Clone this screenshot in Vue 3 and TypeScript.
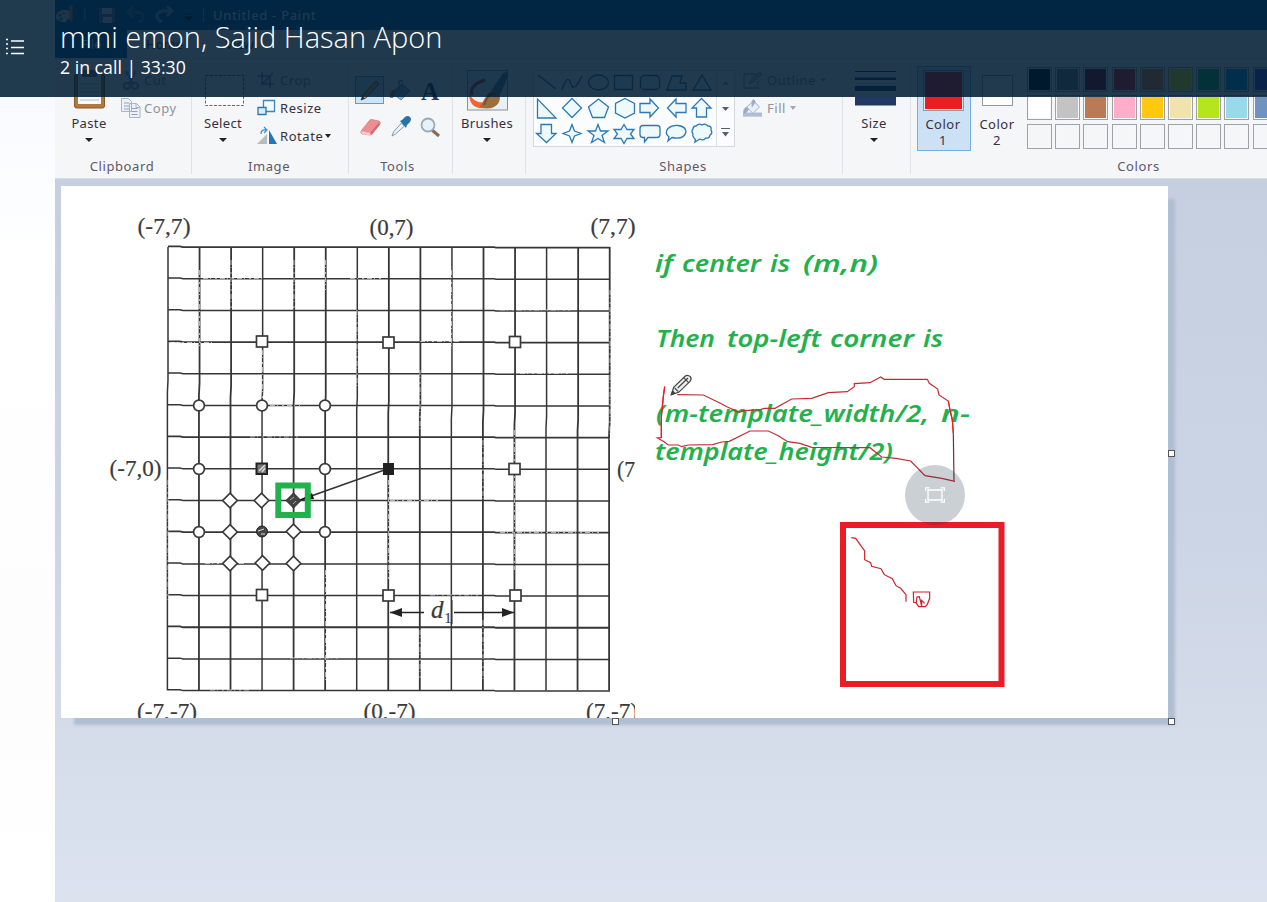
<script setup lang="ts">
const grid = Array.from({ length: 15 }, (_, i) => i)
const gx = (i: number): number => 168 + i * 31.55
const gy = (i: number): number => 247 + i * 31.68

type Pt = [number, number]
const squares: Pt[] = [[262, 341.5], [388.5, 342.5], [515, 342], [514.5, 469], [262, 595], [388.5, 595.5], [515.5, 595.5]]
const circles: Pt[] = [[199, 405.5], [262, 405.5], [325, 405.5], [199, 469], [325, 469], [199, 532], [325, 532]]
const diamonds: Pt[] = [[230, 500.5], [261.5, 500.5], [230, 532], [293.5, 531.5], [230, 563.5], [262.5, 563], [293.5, 563.5]]

interface Label { text: string; x: number; y: number; w: number }
const labels: Label[] = [
  { text: '(-7,7)', x: 137.5, y: 233.5, w: 53 },
  { text: '(0,7)', x: 369.5, y: 234.5, w: 44 },
  { text: '(7,7)', x: 590.5, y: 233.5, w: 45 },
  { text: '(-7,0)', x: 109.5, y: 476, w: 52 },
  { text: '(7', x: 617, y: 476.5, w: 18 },
  { text: '(-7,-7)', x: 137, y: 719, w: 60 },
  { text: '(0,-7)', x: 363.5, y: 719, w: 52 },
  { text: '(7,-7)', x: 586, y: 719, w: 52 },
]

const notes: Label[] = [
  { text: 'if', x: 655, y: 272, w: 18 },
  { text: 'center', x: 682, y: 272, w: 79 },
  { text: 'is', x: 770, y: 272, w: 20 },
  { text: '(m,n)', x: 803, y: 272, w: 75 },
  { text: 'Then', x: 656, y: 347, w: 59 },
  { text: 'top-left', x: 727, y: 347, w: 94 },
  { text: 'corner', x: 830, y: 347, w: 84 },
  { text: 'is', x: 923, y: 347, w: 20 },
  { text: '(m-template_width/2,', x: 656, y: 422, w: 273 },
  { text: 'n-', x: 941, y: 422, w: 29 },
  { text: 'template_height/2)', x: 655, y: 459.5, w: 238 },
]

const palette: string[][] = [
  ['#000000', '#7f7f7f', '#880015', '#ed1c24', '#ff7f27', '#fff200', '#22b14c', '#00a2e8', '#3f48cc'],
  ['#ffffff', '#c3c3c3', '#b97a57', '#ffaec9', '#ffc90e', '#efe4b0', '#b5e61d', '#99d9ea', '#7092be'],
  ['#f5f6f7', '#f5f6f7', '#f5f6f7', '#f5f6f7', '#f5f6f7', '#f5f6f7', '#f5f6f7', '#f5f6f7', '#f5f6f7'],
]
</script>

<template>
  <div class="screen">
    <aside class="rail"></aside>

    <main class="paint">
      <div class="titlebar">
        <svg class="quick" viewBox="55 0 142 30" width="142" height="30">
          <path d="M56 17c0-5 5-8 10-7s8 4 6 7-4 1-5 3 0 3-4 2-7-1-7-5z" fill="#c7dbe9" />
          <circle cx="60" cy="15" r="1.5" fill="#e33" /><circle cx="64" cy="13" r="1.5" fill="#f90" /><circle cx="61" cy="19" r="1.5" fill="#2a4" />
          <path d="M71 5v16" stroke="#e68a2e" stroke-width="3" />
          <path d="M85 8v13" stroke="#86b1d0" />
          <path d="M99 8h16v15H99z" fill="#7d6cc0" /><path d="M102 8h10v6h-10zM103 17h9v6h-9z" fill="#dde" />
          <path d="M129 12h9q5 1 5 5t-5 5M133 7l-5 5 5 5" fill="none" stroke="#3d86c6" stroke-width="3" />
          <path d="M171 11h-8q-6 1-6 5t5 6M167 6l5 5-5 5" fill="none" stroke="#8fb0cc" stroke-width="3" />
          <path d="M184 14h9M185 17h7l-3.500 3.500z" stroke="#000" fill="#000" />
        </svg>
        <i class="bar"></i>
        <span>Untitled - Paint</span>
      </div>
      <nav class="tabs">
        <span class="file">File</span><span class="tab">Home</span><span class="tab">View</span>
      </nav>

      <div class="ribbon">
        <section class="group clipboard">
          <div class="body">
            <div class="big">
              <svg viewBox="64 66 50 48" width="50" height="48">
                <rect x="74.500" y="74" width="30" height="34" rx="2" fill="#b17a3c" stroke="#8a5a28" />
                <path d="M78 74h23v30H78z" fill="#f7f9fc" />
                <path d="M80 84h19M80 88h19M80 92h19M80 96h19M80 100h19" stroke="#b4c2d4" />
                <rect x="82" y="70" width="15" height="7" fill="#6e7884" />
              </svg>
              <span>Paste</span><i class="caret"></i>
            </div>
            <div class="rows">
              <div class="row off"><svg viewBox="0 0 20 20" width="20" height="20"><path d="M5 1l7 13M15 1L8 14" stroke="#8d9cb1" stroke-width="2" /><circle cx="6" cy="16" r="3" fill="none" stroke="#8d9cb1" stroke-width="2" /><circle cx="14" cy="16" r="3" fill="none" stroke="#8d9cb1" stroke-width="2" /></svg>Cut</div>
              <div class="row off"><svg viewBox="0 0 20 20" width="20" height="20"><path d="M.5 .5h7l3 3v10H.5zM8.500 5.500h7l3.500 3.500v10.500H8.500z" fill="#edf1f7" stroke="#a6b4c9" /><path d="M3 5h5M3 8h5M3 11h5M10.500 10.500h6M10.500 13.500h6M10.500 16.500h6" stroke="#8fa4c2" /><path d="M15 5.500V9.500h4" fill="none" stroke="#a6b4c9" /></svg>Copy</div>
            </div>
          </div>
          <footer>Clipboard</footer>
        </section>

        <section class="group image">
          <div class="body">
            <div class="big">
              <svg viewBox="198 66 50 48" width="50" height="48"><rect x="205.500" y="75.500" width="38" height="30" fill="#fbfcfe" stroke="#2a7ab8" stroke-dasharray="3 1.500" /></svg>
              <span>Select</span><i class="caret"></i>
            </div>
            <div class="rows">
              <div class="row off"><svg viewBox="0 0 20 20" width="20" height="20"><path d="M5 2v12h12M1 6h12v12M4 15L16 3" fill="none" stroke="#8294ad" stroke-width="1.500" /></svg>Crop</div>
              <div class="row"><svg viewBox="0 0 20 20" width="20" height="20"><path d="M6.500 2.500h11v11h-11z" fill="#f4f9fd" stroke="#3a87bf" stroke-width="1.300" /><path d="M1 9.500h8v7H1z" fill="#d9edf9" stroke="#2878b5" stroke-width="1.300" /></svg>Resize</div>
              <div class="row"><svg viewBox="0 0 20 20" width="20" height="20"><path d="M10 8v10H0z" fill="#b8bcc0" /><path d="M12 4v14h8z" fill="#2476b5" /><path d="M4 8q0-5 5-4M7 1l3 3-3 3" fill="none" stroke="#3e93cf" stroke-width="1.300" /></svg>Rotate<i class="caret side"></i></div>
            </div>
          </div>
          <footer>Image</footer>
        </section>

        <section class="group tools">
          <div class="body">
            <svg viewBox="355 74 90 70" width="90" height="70">
              <rect x="355.500" y="76.500" width="28" height="27" fill="#cce4f7" stroke="#5a9fd4" />
              <path d="M361 100l2-5 13-14 3 3-13 14z" fill="#e9b84d" stroke="#665430" /><path d="M361 100l1.500-4 2.500 2.500z" fill="#333" />
              <path d="M392 93l10-9 8 7-9 9z" fill="#8fb5d6" stroke="#5c8db7" /><path d="M399 90v-9q3-2 4 2" fill="none" stroke="#567" /><path d="M390 98q-1-8 6-9l-3 9z" fill="#d5702a" />
              <text x="421" y="99.500" textLength="19" class="glyph">A</text>
              <path d="M361 131l8-10q1-2 3-1.500l7 1.500q2 1 1 3l-7 9q-1 2-3 2l-8-1q-2-1-1-3z" fill="#ec8f93" stroke="#cf7478" stroke-width=".6" /><path d="M361 131l9 2v2.500l-8-1.500z" fill="#f8c8c5" /><path d="M370 133l9-10.500 1 2-8 9.500z" fill="#d8686f" />
              <path d="M392 136l1.500-4 8-9 3 3-9 8z" fill="#eaf4fb" stroke="#8497a7" /><path d="M400 121l2-1 3-3q3-2 5 0t0 5l-3 3-1 3z" fill="#2872ae" />
              <path d="M432 130l7 6" stroke="#8b6a51" stroke-width="3" /><circle cx="428" cy="125" r="6.500" fill="#e4f2fc" stroke="#9da9b4" stroke-width="1.800" />
            </svg>
          </div>
          <footer>Tools</footer>
        </section>

        <section class="group brushes">
          <div class="body">
            <div class="big">
              <svg viewBox="462 66 50 48" width="50" height="48">
                <rect x="467.500" y="70.500" width="40" height="39.500" fill="#e9f1f6" stroke="#8b9096" />
                <path d="M485 80q-16 5-13 15" fill="none" stroke="#b54b2b" stroke-width="3" />
                <path d="M469 93q5 12 19 9l-3 6q-6 1-11-2-5-4-5-13z" fill="#f9622c" />
                <path d="M491 91l12-18 4-1v7l-8 18z" fill="#5e8dac" />
                <path d="M480 107q2-4 5-9 4-7 9-7l6 6q0 7-6 10-6 3-14 0z" fill="#9a7040" /><path d="M484 105q3-9 9-12" stroke="#6f4c27" fill="none" stroke-width="1.500" />
              </svg>
              <span>Brushes</span><i class="caret"></i>
            </div>
          </div>
          <footer></footer>
        </section>

        <section class="group shapes">
          <div class="body">
            <svg viewBox="533 70 202 77" width="202" height="77">
              <rect x="533.500" y="70.500" width="201" height="76" fill="#fbfcfd" stroke="#d4d7dc" />
              <path d="M716.500 70v76" stroke="#dcdfe4" />
              <g fill="#eef9fc" stroke="#2d78b4" stroke-width="1.300">
                <path d="M538 75l18 14" /><path d="M562 90c4-13 7-13 9-6s6 2 11-8" fill="none" />
                <ellipse cx="598.500" cy="82.500" rx="10" ry="7.500" /><path d="M614.500 75.500h18v14h-18z" />
                <rect x="640.500" y="75.500" width="19" height="14" rx="4" /><path d="M667 90l5-14h10l-2 7h6v7z" /><path d="M702 75l-9 15h18z" />
                <path d="M537.500 99v19H556z" /><path d="M572 98.500l9.500 9.500-9.500 9.500-9.500-9.500z" />
                <path d="M598.500 99l10 8-4 10.500h-12l-4-10.500z" /><path d="M625 98.500l9.500 5v9.500l-9.500 5-9.500-5v-9.500z" />
                <path d="M640 103.500h10V99l8.500 9-8.500 9v-4.500h-10z" /><path d="M686 103.500h-10V99l-8.500 9 8.500 9v-4.500h10z" />
                <path d="M696.500 117v-9H692l9.500-9.500 9.500 9.500h-4.500v9z" />
                <path d="M541 124.500v9h-4.500l10 9 9.500-9h-4.500v-9z" /><path d="M572 124.500l2.500 6.500 6.500 2.500-6.500 2.500-2.500 6.500-2.500-6.500-6.500-2.500 6.500-2.500z" />
                <path d="M598 124.500l2.500 6.500h7.500l-6 4.500 2.500 7-6.500-4-6.500 4 2.500-7-6-4.500h7.500z" /><path d="M624 124.500l3 5h7l-3.500 4.500 3.500 4.500h-7l-3 5-3-5h-7l3.500-4.500-3.500-4.500h7z" />
                <path d="M643 125.500h14q3 0 3 3v6q0 3-3 3h-9l-3.500 4.500v-4.500H643q-3 0-3-3v-6q0-3 3-3z" />
                <path d="M669 137q-5-4-1-8.500 4-3.500 10-3 8 1 8 6.500-2 8-14 5.500l-4 3.500z" />
                <path d="M696 126q3-3 6-1 3-2 6 1 4 0 3 4 2 3-1 5-1 4-4 3-3 3-6 1l-5 3q1-3-1-4-2-2-1-4-2-3 0-5 0-3 3-3z" />
              </g>
              <path d="M722 85h7l-3.500-4z" fill="#aab2bc" /><path d="M722 107h7l-3.500 4zM722 132h7l-3.500 4.500z" fill="#56616e" /><path d="M721 128.500h9" stroke="#56616e" />
            </svg>
            <div class="rows">
              <div class="row off"><svg viewBox="0 0 20 20" width="20" height="20"><path d="M1 4h13M1 4v14h14v-7" fill="none" stroke="#a1aec2" stroke-width="1.300" /><path d="M6 14l2-4 9-8 2 2-9 8z" fill="#ccd5e0" stroke="#8f9db1" /></svg>Outline<i class="caret side"></i></div>
              <div class="row off fill"><svg viewBox="0 0 22 20" width="20" height="20"><path d="M0 15h21v4.500H0z" fill="#adbdd5" /><path d="M4 9l8-7 6 7-7 7z" fill="#e9eff6" stroke="#97a9c4" /><path d="M10 9V2q1-2 3 0v3M4 9q-4 2-3 7 4-1 5-5" fill="#9bacc6" stroke="#9bacc6" /></svg>Fill<i class="caret side"></i></div>
            </div>
          </div>
          <footer>Shapes</footer>
        </section>

        <section class="group size">
          <div class="body">
            <div class="big">
              <svg viewBox="849 66 50 48" width="50" height="48"><path d="M855 71h41v1h-41zM855 77.500h41v2.500h-41zM855 86h41v5h-41zM855 97h41v8.500h-41z" fill="#1f3864" /></svg>
              <span>Size</span><i class="caret"></i>
            </div>
          </div>
          <footer></footer>
        </section>

        <section class="group colors">
          <div class="body">
            <div class="swatch on"><i class="chip red"></i><span>Color<br>1</span></div>
            <div class="swatch"><i class="chip white"></i><span>Color<br>2</span></div>
            <div class="palette">
              <div v-for="(r, k) in palette" :key="k" class="line">
                <i v-for="(c, n) in r" :key="n" class="cell" :style="{ background: c }"></i>
              </div>
            </div>
          </div>
          <footer>Colors</footer>
        </section>
      </div>

      <div class="workspace">
        <div class="canvas">
          <svg viewBox="61 186 1107 532" width="1107" height="532">
            <defs><clipPath id="figure"><rect x="61" y="186" width="574" height="532" /></clipPath></defs>
            <g fill="none" stroke="#363636" stroke-width="1.400">
              <path v-for="i in grid" :key="'v' + i" :d="`M${gx(i)} 247V${380 + i * 3}l-.6 12V690.500`" :stroke-width="i % 3 ? 1.800 : 1.500" />
              <path v-for="i in grid" :key="'h' + i" :d="`M168 ${gy(i) - 0.7}h12l3 .8H494l2 .5H610`" :stroke-width="i % 3 ? 1.500 : 1.800" />
            </g>
            <g stroke="#fff" stroke-width="1" stroke-dasharray="5 2 1 4 2 3" opacity=".6">
              <path d="M203 278.500h60M350 278.500h34M170 342.500h45M520 373.500h50M270 405.500h30M250 437h50M500 310h70M420 341.500h40M500 532.500h100M205 563.500h40M290 658h50M430 595h50M210 690h40M390 500.500h50" />
              <path d="M199.500 270v80M231 260v50M262.500 350v50M294 260v50M325.500 260v30M357 310v80M420 370v60M451.500 270v80M610 290v150M325.500 570v110M388.500 480v100M420 630v50M514.500 430v140M168 480v120M483 440v60M483 620v60" />
            </g>
            <g fill="#fff" stroke="#3a3a3a" stroke-width="1.700">
              <rect v-for="([x, y], i) in squares" :key="'s' + i" :x="x - 5.5" :y="y - 5.5" width="11" height="11" />
              <circle v-for="([x, y], i) in circles" :key="'c' + i" :cx="x" :cy="y" r="5.400" />
              <path v-for="([x, y], i) in diamonds" :key="'d' + i" :d="`M${x} ${y - 7.3}l7.300 7.300-7.300 7.300-7.300-7.300z`" />
            </g>
            <rect x="256.500" y="463.500" width="10.500" height="10.500" fill="#777" stroke="#222" stroke-width="2" />
            <path d="M259 471l6-6M262 472l3-4" stroke="#ddd" stroke-width="1.500" />
            <circle cx="262" cy="531.500" r="5.500" fill="#444" stroke="#222" /><path d="M258 531l6-2M261 534h4" stroke="#ddd" />
            <rect x="383" y="463" width="11" height="12" fill="#202020" />
            <path d="M383 470.500L300 500" stroke="#333" stroke-width="1.500" />
            <path d="M300 500l12-7 2 6z" fill="#111" />
            <path d="M293.500 493l7.500 7.500-7.500 7.500-7.500-7.500z" fill="#444" stroke="#222" /><path d="M290 500l4-3M293 504l3-3" stroke="#aaa" />
            <rect x="278.300" y="485.500" width="29.500" height="29.500" fill="none" stroke="#22b14c" stroke-width="6" />
            <rect x="424" y="601" width="25" height="23" fill="#fff" />
            <path d="M451.800 600v24" stroke="#333" stroke-width="1.400" />
            <path d="M390 612.500h34M454 612.500h60" stroke="#222" stroke-width="1.300" /><path d="M390 612.500l12-4.500v9zM514 612.500l-12-4.500v9z" fill="#222" />
            <g class="math" clip-path="url(#figure)">
              <text v-for="l in labels" :key="l.text" :x="l.x" :y="l.y" :textLength="l.w" lengthAdjust="spacingAndGlyphs">{{ l.text }}</text>
              <text x="431" y="618" class="dist">d</text><text x="444.500" y="623" class="sub">1</text>
            </g>
            <g class="note">
              <text v-for="n in notes" :key="n.text + n.y" :x="n.x" :y="n.y" :textLength="n.w" lengthAdjust="spacingAndGlyphs">{{ n.text }}</text>
            </g>
            <g fill="none" stroke="#c22b33" stroke-width="3.600">
              <g transform="translate(640 230) scale(.33333)">
                <path d="M112 494L190 495 235 517 262 531 298 547 312 542 362 539 372 535 405 535 455 507 515 505 565 488 622 485 643 470V461L690 458 722 441 732 448H862L868 460 893 477 897 495 925 513 930 540 937 570 940 610" />
                <path d="M940 610L942 752" stroke="#7a2d38" />
                <path d="M74 470L70 500 64 560V623L52 624 70 634 85 645H115L125 650 145 645 218 644 245 636 268 634 330 603H385L415 617 443 635 480 640 515 652 690 653 725 681 768 685 812 693 855 737 905 745 945 754" />
                <path d="M74 470L70 500 64 560V623M925 513L930 540 937 570 940 610" stroke="#ed1c24" />
                <path d="M94 494L101 472 136 438Q143 433 151 440 156 447 150 454L116 487Z" fill="#eee" stroke="#444" /><path d="M104 474L115 485M113 474L144 444M131 443L146 458M94 494L98 483 104 490Z" stroke="#444" fill="#222" />
              </g>
              <path transform="translate(830 510) scale(.33333)" d="M64 83L77 85 104 123V149L122 158 125 169 153 176 163 194 187 206 198 227 212 235 228 254V275M250 246H299V265L292 283 286 290H266L258 278 251 277ZM259 278L261 261 268 260 275 288V271L284 280" stroke="#cf222b" />
            </g>
            <rect x="843" y="525" width="158.500" height="159" fill="none" stroke="#ed1c24" stroke-width="6" />
          </svg>
        </div>
        <i class="handle right"></i><i class="handle bottom"></i><i class="handle corner"></i>
      </div>
    </main>

    <button class="fit" aria-label="Fit to screen">
      <svg viewBox="0 0 20 16" width="20" height="16" fill="none" stroke="#fff" stroke-width="1.300"><path d="M3 3h14v10H3zM.6 4V.8h4M15.400 .8h4V4M19.400 12v3.200h-4M4.600 15.200h-4V12" /></svg>
    </button>

    <header class="callbar">
      <svg class="menu" viewBox="0 0 20 18" width="20" height="18" stroke="#fff" stroke-width="1.500"><path d="M6 3h13M6 9.500h13M6 15.500h13M1 1.500h2M1 6h2M1 10.500h2M1 15.500h2" /></svg>
      <div>
        <h1>mmi emon, Sajid Hasan Apon</h1>
        <p>2 in call | 33:30</p>
      </div>
    </header>
  </div>
</template>

<style>
body { margin: 0; overflow: hidden; }
</style>

<style scoped>
* { box-sizing: border-box; }
.screen { position: relative; display: flex; width: 1267px; height: 902px; overflow: hidden; font-family: "Noto Sans", "Open Sans", sans-serif; }
.rail { flex: 0 0 55px; background: linear-gradient(#f7faff 97px, #fff 260px, #fdfdfe 700px, #fff); }
.paint { flex: 1; min-width: 0; display: flex; flex-direction: column; }
.titlebar { height: 30px; background: #0063b1; display: flex; align-items: center; color: #fff; font-size: 13px; letter-spacing: .75px; }
.bar { width: 1px; height: 14px; background: #86b1d0; margin: 0 9px 0 6px; }
.tabs { height: 29px; display: flex; background: #f5f6f7; font-size: 13px; color: #333; border-bottom: 1px solid #e1e3e6; line-height: 29px; text-align: center; }
.file { width: 72px; background: #0063b1; color: #fff; }
.tab { width: 75px; }
.ribbon { height: 120px; display: flex; background: #f5f6f7; border-bottom: 1px solid #d9dde3; font-size: 13px; color: #382f42; overflow: hidden; }
.group { flex: none; position: relative; display: flex; flex-direction: column; }
.group::after { content: ""; position: absolute; right: 0; top: 4px; bottom: 4px; width: 1px; background: #e0e2e6; }
.body { display: flex; align-items: flex-start; height: 97px; padding-top: 7px; }
footer { height: 22px; line-height: 21px; padding-right: 3px; text-align: center; color: #62566a; letter-spacing: .6px; }
.big { width: 50px; display: flex; flex-direction: column; align-items: center; }
.big svg { display: block; }
.big span { line-height: 19px; height: 20px; white-space: nowrap; letter-spacing: .35px; }
.caret { width: 0; height: 0; border: 4px solid transparent; border-top-color: #222; border-bottom: 0; margin-top: 4px; }
.caret.side { margin: 0 0 0 -1px; border-width: 4px 3.500px 0; }
.row { height: 28px; display: flex; align-items: center; gap: 3px; white-space: nowrap; letter-spacing: .55px; }
.off { color: #8f93a0; }
.off .caret { border-top-color: #a3a7b1; }
.clipboard { width: 137px; }
.clipboard .body { padding-left: 9px; }
.clipboard .rows { margin-left: 7px; }
.image { width: 157px; }
.image .body { padding-left: 6px; }
.image .rows { margin-left: 9px; }
.tools { width: 104px; }
.tools .body { padding: 15px 0 0 6px; }
.tools footer { padding-right: 7px; }
.glyph { font: bold 25px "Liberation Serif", serif; fill: #283f60; }
.brushes { width: 73px; }
.brushes .body { padding-left: 9px; }
.shapes { width: 317px; }
.shapes .body { padding-left: 7px; }
.shapes .body > svg { margin-top: 4px; }
.shapes .rows { margin-left: 8px; }
.shapes .row { gap: 4px; }
.shapes .row .side { margin-left: 0; }
.size { width: 68px; }
.size .body { padding-left: 6px; }
.colors { width: 458px; }
.colors .body { padding-left: 6px; }
.swatch { width: 54px; height: 85px; display: flex; flex-direction: column; align-items: center; text-align: center; line-height: 16px; letter-spacing: .5px; padding: 3px 2px 0 0; border: 1px solid transparent; }
.swatch span { margin-top: 5px; }
.swatch.on { background: #cce1f6; border-color: #75aee0; }
.chip { width: 41px; height: 41px; margin-left: 1px; border: 1px solid #929aa1; }
.chip.red { background: #ed1c24; box-shadow: inset 0 0 0 1px #dfe9f0; }
.chip.white { width: 31px; height: 31px; margin: 5px 0 5px 1px; background: #fff; }
.palette { margin: 1px 0 0 2px; display: flex; flex-direction: column; gap: 3.300px; }
.line { display: flex; gap: 3.200px; }
.cell { width: 25px; height: 25px; border: 1px solid #a0a1a4; box-shadow: inset 0 0 0 1px #f6f7f8; }
.workspace { flex: 1; position: relative; padding: 7px 0 0 6px; background: linear-gradient(#c5cfdf, #ccd5e5 50%, #dce3ef); }
.canvas { width: 1107px; height: 532px; background: #fff; box-shadow: 10px 10px 3px -3px #afbed2; }
.canvas svg { display: block; }
.handle { position: absolute; width: 7px; height: 7px; background: #fff; border: 1px solid #555; }
.right { left: 1113px; top: 271px; }
.bottom { left: 557px; top: 539px; }
.corner { left: 1113px; top: 539px; }
.math { font-family: "Liberation Serif", serif; font-size: 24px; fill: #3a3a3a; stroke: #3a3a3a; stroke-width: .2px; }
.dist { font-style: italic; font-size: 25px; }
.sub { font-size: 14px; }
.note { font: italic 600 24px "Noto Sans", sans-serif; fill: #22b14c; }
.fit { position: absolute; left: 905px; top: 465px; width: 60px; height: 60px; padding: 0; border: 0; border-radius: 50%; background: rgba(30, 54, 75, .23); display: flex; align-items: center; justify-content: center; }
.callbar { position: absolute; inset: 0 0 auto 0; height: 97px; display: flex; background: rgba(0, 29, 52, .87); color: #fff; }
.menu { margin: 38px 35px 0 5px; }
h1 { margin: 17px 0 0; font: 300 29px/40px "Open Sans", "Noto Sans", sans-serif; white-space: nowrap; }
p { margin: -1px 0 0; font: 400 17.700px/22px "Open Sans", "Noto Sans", sans-serif; }
</style>
